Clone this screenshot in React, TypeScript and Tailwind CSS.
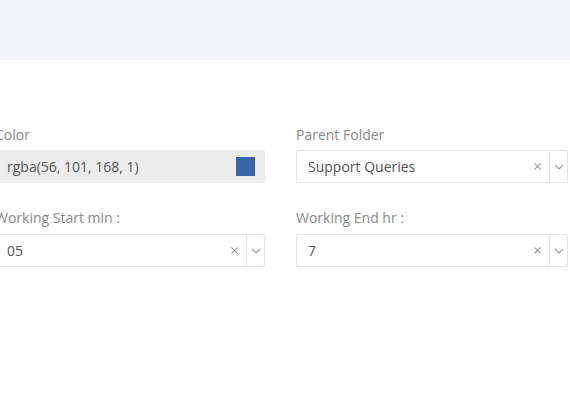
import React from 'react';

const font = { fontFamily: '"Open Sans", "Noto Sans", sans-serif' };

const ClearIcon = () => (
  <svg width="9" height="9" viewBox="0 0 10 10" className="text-[#999]">
    <path d="M1.5 1.5 L8.5 8.5 M8.5 1.5 L1.5 8.5" stroke="currentColor" strokeWidth="1.2" fill="none" />
  </svg>
);

const ChevronIcon = () => (
  <svg width="10" height="6" viewBox="0 0 10 6" className="text-[#999]">
    <path d="M1 1 L5 5 L9 1" stroke="currentColor" strokeWidth="1.1" fill="none" />
  </svg>
);

const SelectField = ({ label, value }: { label: string; value: string }) => (
  <div className="flex flex-col">
    <label className="text-[14px] leading-[20px] text-[#8a8a8a] mb-[6px]">{label}</label>
    <div className="flex items-center h-[33px] border border-[#e3e3e3] bg-white rounded-[2px]">
      <span className="flex-1 pl-[11px] text-[14px] text-[#555]">{value}</span>
      <span className="w-[24px] flex justify-center">
        <ClearIcon />
      </span>
      <span className="w-[18px] h-full border-l border-[#e3e3e3] flex items-center justify-center">
        <ChevronIcon />
      </span>
    </div>
  </div>
);

export default function App() {
  return (
    <div className="w-full h-[410px] bg-white overflow-hidden" style={font}>
      {/* header band */}
      <div className="h-[60px] bg-[#f3f4f8]" />

      <div className="grid grid-cols-[270px_272px] gap-x-[31px] gap-y-[25px] ml-[-5px] pt-[65px]">
        <div className="flex flex-col">
          <label className="text-[14px] leading-[20px] text-[#8a8a8a] mb-[5px]">Color</label>
          <div className="flex items-center h-[33px] bg-[#ececec] rounded-[2px] pl-[12px] pr-[10px]">
            <span className="flex-1 text-[14px] text-[#555]">rgba(56, 101, 168, 1)</span>
            <span className="w-[19px] h-[19px] bg-[rgb(56,101,168)]" />
          </div>
        </div>

        <div className="flex flex-col">
          <label className="text-[14px] leading-[20px] text-[#8a8a8a] mb-[5px]">Parent Folder</label>
          <div className="flex items-center h-[33px] border border-[#e3e3e3] bg-white rounded-[2px]">
            <span className="flex-1 pl-[11px] text-[14px] text-[#555]">Support Queries</span>
            <span className="w-[24px] flex justify-center">
              <ClearIcon />
            </span>
            <span className="w-[18px] h-full border-l border-[#e3e3e3] flex items-center justify-center">
              <ChevronIcon />
            </span>
          </div>
        </div>

        <SelectField label="Working Start min :" value="05" />
        <SelectField label="Working End hr :" value="7" />
      </div>
    </div>
  );
}
